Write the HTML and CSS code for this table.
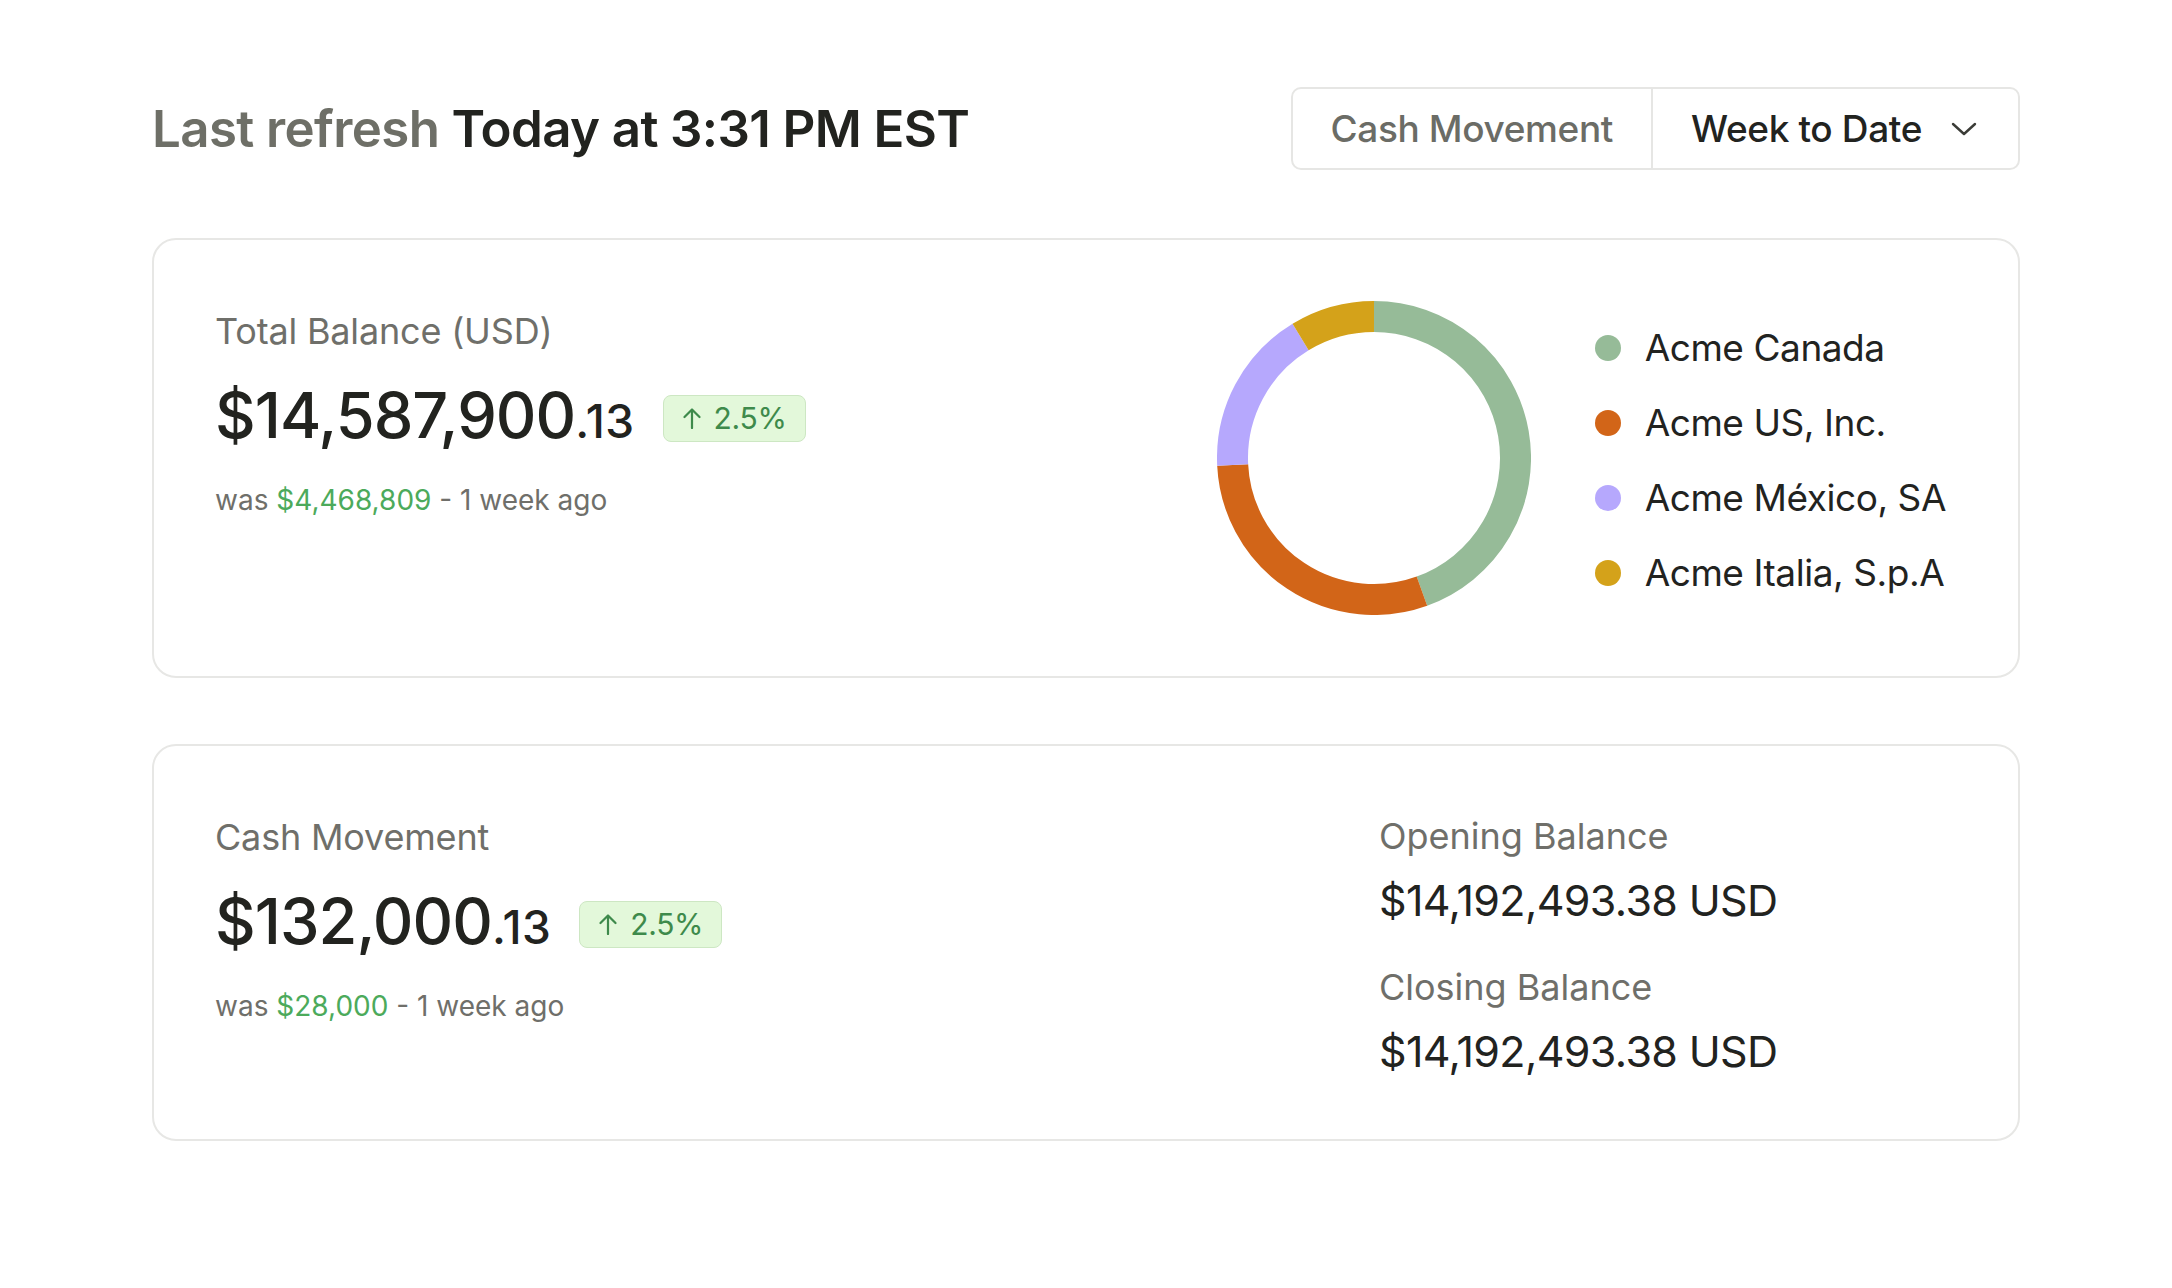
FILE: index.html
```html
<!DOCTYPE html>
<html lang="en">
<head>
<meta charset="utf-8">
<title>Cash Overview</title>
<link rel="stylesheet" href="styles.css">
</head>
<body>
<main class="page">
  <header class="topbar">
    <h1 class="refresh"><span class="refresh-label">Last refresh</span> Today at 3:31 PM EST</h1>
    <div class="segmented">
      <div class="seg seg-muted">Cash Movement</div>
      <div class="seg seg-select">Week to Date
        <svg class="chevron" viewBox="0 0 26 14" width="26" height="14"><path d="M2 2 L13 12 L24 2" fill="none" stroke="currentColor" stroke-width="2.4" stroke-linecap="round" stroke-linejoin="round"/></svg>
      </div>
    </div>
  </header>

  <section class="card card-balance">
    <div class="metric">
      <div class="metric-label">Total Balance (USD)</div>
      <div class="metric-row">
        <span class="amount">$14,587,900<span class="cents">.13</span></span>
        <span class="badge"><svg class="arrow" viewBox="0 0 20 22" width="20" height="22"><path d="M10 21 V2.5 M2.5 10 L10 2.5 L17.5 10" fill="none" stroke="currentColor" stroke-width="2.2" stroke-linecap="round" stroke-linejoin="round"/></svg>2.5%</span>
      </div>
      <div class="metric-note">was <span class="pos">$4,468,809</span> - 1 week ago</div>
    </div>
    <div class="chart-group">
      <svg class="donut" viewBox="0 0 314 314" width="314" height="314">
        <g fill="none" stroke-width="31">
          <path d="M157 15.5 A141.5 141.5 0 0 1 204.93 290.14" stroke="#96bb98"/>
          <path d="M204.93 290.14 A141.5 141.5 0 0 1 15.67 163.91" stroke="#d26518"/>
          <path d="M15.67 163.91 A141.5 141.5 0 0 1 83.59 36.03" stroke="#b6a8fd"/>
          <path d="M83.59 36.03 A141.5 141.5 0 0 1 157 15.5" stroke="#d4a21a"/>
        </g>
      </svg>
      <ul class="legend">
        <li class="legend-item"><span class="dot dot-green"></span>Acme Canada</li>
        <li class="legend-item"><span class="dot dot-orange"></span>Acme US, Inc.</li>
        <li class="legend-item"><span class="dot dot-purple"></span>Acme México, SA</li>
        <li class="legend-item"><span class="dot dot-yellow"></span>Acme Italia, S.p.A</li>
      </ul>
    </div>
  </section>

  <section class="card card-movement">
    <div class="metric">
      <div class="metric-label">Cash Movement</div>
      <div class="metric-row">
        <span class="amount">$132,000<span class="cents">.13</span></span>
        <span class="badge"><svg class="arrow" viewBox="0 0 20 22" width="20" height="22"><path d="M10 21 V2.5 M2.5 10 L10 2.5 L17.5 10" fill="none" stroke="currentColor" stroke-width="2.2" stroke-linecap="round" stroke-linejoin="round"/></svg>2.5%</span>
      </div>
      <div class="metric-note">was <span class="pos">$28,000</span> - 1 week ago</div>
    </div>
    <div class="balances">
      <div class="stat-label">Opening Balance</div>
      <div class="stat-value">$14,192,493.38 USD</div>
      <div class="stat-label stat-label-next">Closing Balance</div>
      <div class="stat-value">$14,192,493.38 USD</div>
    </div>
  </section>
</main>
</body>
</html>
```

FILE: styles.css
```css
* { box-sizing: border-box; }

html, body {
  margin: 0;
  padding: 0;
  background: #ffffff;
}

body {
  font-family: Inter, "Noto Sans", "Liberation Sans", sans-serif;
  color: #22231f;
}

.page {
  padding: 87px 152px 0;
}

/* Header */
.topbar {
  display: flex;
  align-items: center;
  justify-content: space-between;
}

.refresh {
  margin: 0;
  font-size: 51px;
  font-weight: 600;
  letter-spacing: -0.012em;
  line-height: 1.2;
  color: #22231f;
}

.refresh-label {
  color: #6e6f67;
}

.segmented {
  display: flex;
  height: 83px;
  border: 2px solid #e6e6e4;
  border-radius: 10px;
}

.seg {
  display: flex;
  align-items: center;
  font-size: 37px;
  font-weight: 500;
  letter-spacing: -0.01em;
}

.seg-muted {
  padding: 0 38px;
  color: #6b6c66;
  border-right: 2px solid #e6e6e4;
}

.seg-select {
  padding: 0 41px 0 38px;
  color: #22231f;
  gap: 29px;
}

.chevron {
  color: #3b3c37;
}

/* Cards */
.card {
  border: 2px solid #e7e7e5;
  border-radius: 24px;
  padding: 61px;
  margin-top: 68px;
}

.card-movement {
  display: grid;
  grid-template-columns: 1fr 578px;
  margin-top: 66px;
}

.card-balance {
  display: flex;
  justify-content: space-between;
  align-items: flex-start;
}

.metric {
  padding-top: 3px;
}

.metric-label {
  font-size: 36px;
  line-height: 54px;
  color: #6f6f6a;
  letter-spacing: -0.005em;
}

.metric-row {
  display: flex;
  align-items: center;
  gap: 28px;
  margin-top: 20px;
}

.amount {
  font-size: 63px;
  line-height: 74px;
  font-weight: 500;
  letter-spacing: -0.015em;
  color: #22231f;
}

.cents {
  font-size: 46px;
  letter-spacing: 0.01em;
}

.badge {
  display: inline-flex;
  align-items: center;
  gap: 12px;
  height: 47px;
  padding: 0 18px;
  border: 1.5px solid #cde7c3;
  border-radius: 8px;
  background: #e3f8da;
  color: #3e8a4b;
  font-size: 30px;
  letter-spacing: -0.01em;
}

.arrow {
  display: block;
}

.metric-note {
  margin-top: 21px;
  font-size: 28px;
  line-height: 42px;
  color: #6f6f6a;
}

.pos {
  color: #4caa5b;
}

/* Donut + legend */
.chart-group {
  display: flex;
  align-items: center;
  gap: 64px;
  margin-right: 11px;
}

.donut {
  display: block;
}

.legend {
  list-style: none;
  margin: 0;
  padding: 4px 0 0;
  display: flex;
  flex-direction: column;
  gap: 18px;
}

.legend-item {
  display: flex;
  align-items: center;
  gap: 24px;
  font-size: 37px;
  line-height: 57px;
  color: #22231f;
  letter-spacing: -0.012em;
}

.dot {
  width: 26px;
  height: 26px;
  border-radius: 50%;
  flex: none;
}

.dot-green { background: #96bb98; }
.dot-orange { background: #d26518; }
.dot-purple { background: #b6a8fd; }
.dot-yellow { background: #d4a21a; }

/* Balances */
.balances {
  padding-top: 2px;
}

.stat-label {
  font-size: 36px;
  line-height: 54px;
  color: #6f6f6a;
}

.stat-label-next {
  margin-top: 33px;
}

.stat-value {
  margin-top: 11px;
  font-size: 43px;
  line-height: 53px;
  color: #22231f;
  letter-spacing: -0.015em;
}
```
